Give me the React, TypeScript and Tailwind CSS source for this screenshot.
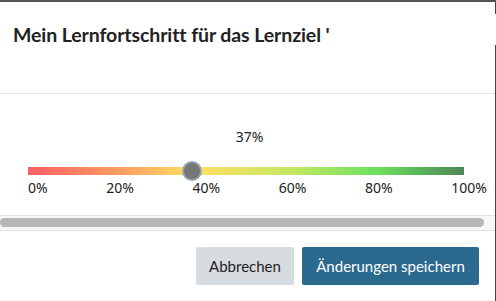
export default function App() {
  const value = 37;
  const labels = ['0%', '20%', '40%', '60%', '80%', '100%'];

  return (
    <div className="relative w-[496px] h-[301px] bg-white overflow-hidden border-t-2 border-[#555] font-['Source_Sans_Pro','Lato','Noto_Sans',sans-serif] text-[#222]">
      {/* right edge of the window */}
      <div className="absolute right-0 top-0 w-px h-[12px] bg-[#444]" />
      <div className="absolute right-0 top-[43px] bottom-0 w-px bg-[#444]" />

      {/* ── Header ── */}
      <div className="h-[92px] border-b border-[#dee2e6] px-[13px] pt-[20px]">
        <h2 className="text-[19.5px] font-bold leading-[26px] tracking-[-0.1px]">
          Mein Lernfortschritt für das Lernziel '
        </h2>
      </div>

      {/* ── Body ── */}
      <div className="h-[121px] pt-[33px] font-['Noto_Sans',sans-serif] text-[14px]">
        <p className="text-center leading-[19px] pl-[3px]">{value}%</p>

        <div className="pl-[28px] pr-[32px] mt-[21px]">
          <div className="relative h-[8px] bg-[linear-gradient(to_right,#ff5f63_0%,#ffa062_22%,#ffe064_38%,#c7e663_60%,#6be15f_80%,#4d8656_100%)]">
            <div
              className="absolute top-1/2 w-[20px] h-[20px] -translate-x-1/2 -translate-y-1/2 rounded-full bg-[#777] border-2 border-[#94a5b4]"
              style={{ left: `${value + 0.7}%` }}
            />
          </div>
        </div>

        <div className="flex justify-between pl-[28px] pr-[9px] mt-[3px] leading-[19px]">
          {labels.map((l) => (
            <span key={l}>{l}</span>
          ))}
        </div>
      </div>

      {/* ── Horizontal scrollbar ── */}
      <div className="h-[16px] mr-px border-t border-[#e4e4e4] border-b border-b-[#dde3e8] bg-[#f7f7f7] pt-[2px]">
        <div className="h-[9px] w-[484px] rounded-full bg-[#b6b6b6]" />
      </div>

      {/* ── Footer ── */}
      <div className="flex justify-end gap-[8px] pt-[16px] pr-[17px] text-[15px]">
        <button className="h-[38px] w-[98px] rounded-[2px] bg-[#d7dce1] text-[#222]">Abbrechen</button>
        <button className="h-[38px] w-[177px] rounded-[2px] bg-[#2b6a8e] text-white">Änderungen speichern</button>
      </div>
    </div>
  );
}
